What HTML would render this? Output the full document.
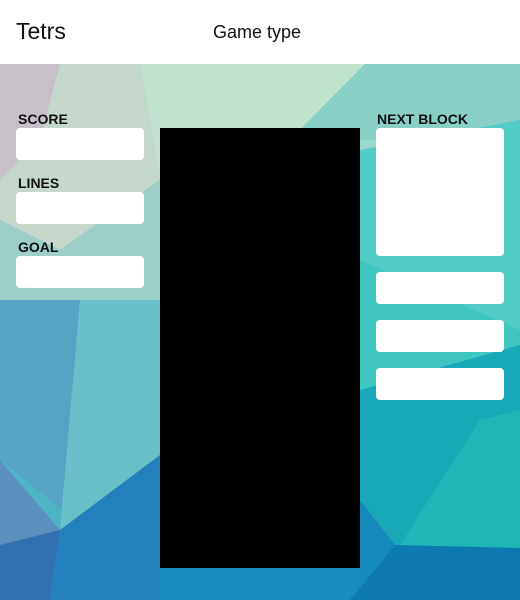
<!DOCTYPE html>
<html><head><style>
body{margin:0;width:520px;height:600px;overflow:hidden;font-family:"Liberation Sans",sans-serif;position:relative}
.hdr{position:absolute;left:0;top:0;width:520px;height:64px;background:#fff}
.t{position:absolute;left:16px;top:18px;font-size:23px;color:#111}
.g{position:absolute;left:213px;top:22px;font-size:18px;color:#111}
svg{position:absolute;left:0;top:64px}
.l{position:absolute;font-weight:bold;font-size:14px;color:#111}
.b{position:absolute;background:#fff;border-radius:4px}
</style></head><body>
<div class="hdr"><div class="t">Tetrs</div><div class="g">Game type</div></div>
<svg width="520" height="536" viewBox="0 64 520 536">
<rect x="0" y="64" width="520" height="536" fill="#4eb4c4"/>
<polygon points="0,64 140,64 160,180 60,250 0,220" fill="#c6d8cc"/>
<polygon points="0,64 60,64 40,140 0,180" fill="#c8c0c8"/>
<polygon points="140,64 365,64 290,140 160,180" fill="#c2e2d0"/>
<polygon points="365,64 520,64 520,120 420,140 290,140" fill="#88d0c6"/>
<polygon points="160,180 290,140 420,140 360,260 160,260" fill="#9ad8cc"/>
<polygon points="0,220 60,250 160,180 160,300 80,330 0,300" fill="#9ccfc8"/>
<polygon points="360,150 520,120 520,330 420,300 360,260" fill="#52ccc4"/>
<polygon points="0,300 80,300 75,520 0,460" fill="#56a4c4"/>
<polygon points="80,300 160,300 160,455 60,530" fill="#6ac0c8"/>
<polygon points="360,260 520,330 520,345 360,390" fill="#40c6c0"/>
<polygon points="360,390 520,345 520,548 395,545 360,500" fill="#18a8b8"/>
<polygon points="400,545 480,420 520,410 520,548" fill="#20b6b8"/>
<polygon points="0,460 60,530 0,545" fill="#5a90c0"/>
<polygon points="0,545 60,530 50,600 0,600" fill="#3070b0"/>
<polygon points="60,530 160,455 160,600 50,600" fill="#2480bc"/>
<polygon points="160,568 360,568 360,600 160,600" fill="#1a8cc0"/>
<polygon points="360,500 395,545 350,600 360,600" fill="#1588bc"/>
<polygon points="395,545 520,548 520,600 350,600" fill="#0e78b0"/>
</svg>
<div class="l" style="left:18px;top:111px">SCORE</div>
<div class="b" style="left:16px;top:128px;width:128px;height:32px"></div>
<div class="l" style="left:18px;top:175px">LINES</div>
<div class="b" style="left:16px;top:192px;width:128px;height:32px"></div>
<div class="l" style="left:18px;top:239px">GOAL</div>
<div class="b" style="left:16px;top:256px;width:128px;height:32px"></div>
<div style="position:absolute;left:160px;top:128px;width:200px;height:440px;background:#000"></div>
<div class="l" style="left:377px;top:111px">NEXT BLOCK</div>
<div class="b" style="left:376px;top:128px;width:128px;height:128px"></div>
<div class="b" style="left:376px;top:272px;width:128px;height:32px"></div>
<div class="b" style="left:376px;top:320px;width:128px;height:32px"></div>
<div class="b" style="left:376px;top:368px;width:128px;height:32px"></div>
</body></html>
